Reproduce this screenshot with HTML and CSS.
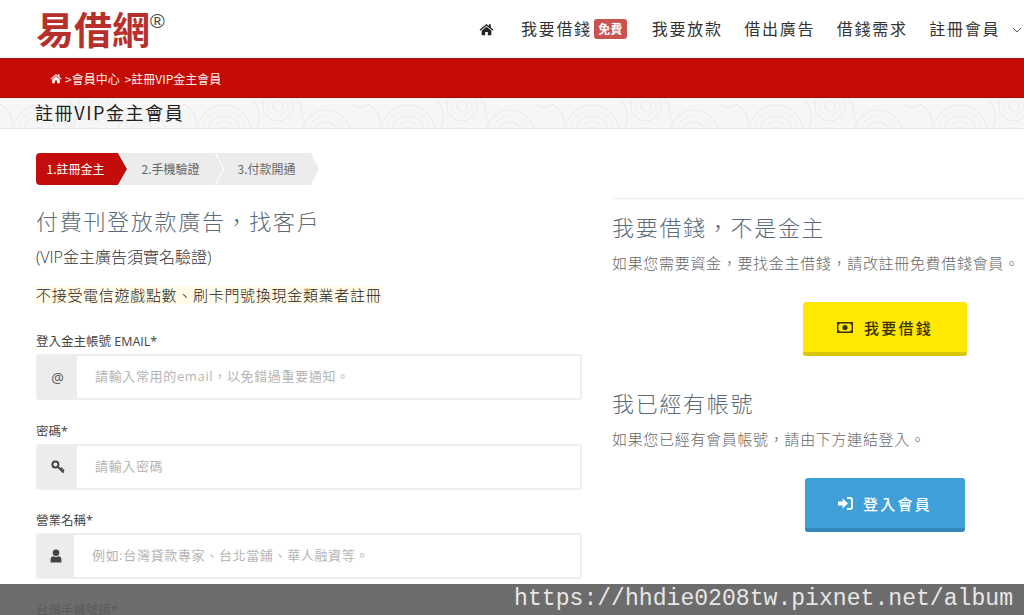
FILE: index.html
```html
<!DOCTYPE html>
<html lang="zh-Hant">
<head>
<meta charset="utf-8">
<title>註冊VIP金主會員</title>
<link rel="stylesheet" href="styles.css">
</head>
<body>
<div class="page">
  <header class="topbar">
    <div class="logo">易借網<span class="reg">®</span></div>
    <nav class="nav">
      <a class="nav-home"><svg class="ico-home" viewBox="0 0 16 14"><path d="M8 1 L0.5 7.2 L1.4 8.3 L8 2.9 L14.6 8.3 L15.5 7.2 L12.6 4.8 V1.4 H10.6 V3.2 Z"/><path d="M8 4 L2.8 8.3 V13.2 H6.6 V9.6 H9.4 V13.2 H13.2 V8.3 Z"/></svg></a>
      <a class="nav-item nav-first">我要借錢<span class="badge">免費</span></a>
      <a class="nav-item">我要放款</a>
      <a class="nav-item">借出廣告</a>
      <a class="nav-item">借錢需求</a>
      <a class="nav-item">註冊會員</a>
      <svg class="ico-chev" viewBox="0 0 10 6"><path d="M1 1 L5 5 L9 1"/></svg>
    </nav>
  </header>
  <div class="crumbbar">
    <svg class="ico-crumb" viewBox="0 0 16 14"><path d="M8 1 L0.5 7.2 L1.4 8.3 L8 2.9 L14.6 8.3 L15.5 7.2 L12.6 4.8 V1.4 H10.6 V3.2 Z"/><path d="M8 4 L2.8 8.3 V13.2 H6.6 V9.6 H9.4 V13.2 H13.2 V8.3 Z"/></svg>
    <span>&gt;會員中心</span><span class="crumb-sep">&gt;註冊VIP金主會員</span>
  </div>
  <div class="titleband">
    <svg class="pattern" aria-hidden="true">
      <defs>
        <pattern id="lace" width="184" height="62" patternUnits="userSpaceOnUse">
          <g fill="none" stroke="#ebebeb" stroke-width="1.1">
            <circle cx="40" cy="34" r="27"/><circle cx="40" cy="34" r="22" stroke-dasharray="2 2"/><circle cx="40" cy="34" r="16"/><circle cx="40" cy="34" r="10" stroke-dasharray="2 2"/><circle cx="40" cy="34" r="5"/>
            <circle cx="94" cy="8" r="15"/><circle cx="94" cy="8" r="10" stroke-dasharray="2 2"/><circle cx="94" cy="8" r="5"/>
            <circle cx="142" cy="36" r="24"/><circle cx="142" cy="36" r="18" stroke-dasharray="2 2"/><circle cx="142" cy="36" r="12"/>
            <path d="M68 0 Q82 20 70 34 Q90 26 112 34 M72 60 Q90 32 114 60 M112 0 Q120 10 118 20 M0 6 Q14 14 12 28 M166 6 Q178 12 184 6"/>
          </g>
        </pattern>
      </defs>
      <rect width="100%" height="100%" fill="url(#lace)"/>
    </svg>
    <h1 class="pagetitle">註冊VIP金主會員</h1>
  </div>
  <ol class="steps">
    <li class="step step-on">1.註冊金主</li>
    <li class="step">2.手機驗證</li>
    <li class="step">3.付款開通</li>
  </ol>
  <main class="columns">
    <section class="left">
      <h2 class="heading">付費刊登放款廣告，找客戶</h2>
      <p class="sub">(VIP金主廣告須實名驗證)</p>
      <p class="notice"><span class="mark">不接受電信遊戲點數、刷卡門號換現金類業者註冊</span></p>
      <div class="field">
        <label class="label">登入金主帳號 EMAIL*</label>
        <div class="inputgroup"><span class="addon">@</span><span class="ph">請輸入常用的email，以免錯過重要通知。</span></div>
      </div>
      <div class="field">
        <label class="label">密碼*</label>
        <div class="inputgroup"><span class="addon"><svg class="ico-key" viewBox="0 0 14 14"><circle cx="4.4" cy="4.4" r="3" fill="none" stroke-width="2"/><path d="M6.6 6.6 L12.6 12.6 M9.4 9.4 L11.2 7.8 M11.2 11.2 L13 9.6" fill="none" stroke-width="2"/></svg></span><span class="ph">請輸入密碼</span></div>
      </div>
      <div class="field">
        <label class="label">營業名稱*</label>
        <div class="inputgroup inputgroup-narrow"><span class="addon"><svg class="ico-user" viewBox="0 0 12 14"><circle cx="6" cy="3.8" r="3.3"/><path d="M0.6 13.4 V10.4 Q0.6 7.6 3.4 7.2 Q6 8.8 8.6 7.2 Q11.4 7.6 11.4 10.4 V13.4 Z"/></svg></span><span class="ph">例如:台灣貸款專家、台北當鋪、華人融資等。</span></div>
      </div>
      <div class="field">
        <label class="label">台灣手機號碼*</label>
      </div>
    </section>
    <aside class="right">
      <h2 class="heading heading-side">我要借錢，不是金主</h2>
      <p class="desc">如果您需要資金，要找金主借錢，請改註冊免費借錢會員。</p>
      <div class="btnrow"><a class="btn btn-yellow"><svg class="ico-money" viewBox="0 0 16 11"><path d="M0 0 H16 V11 H0 Z M2.6 1.6 Q2.6 3 1.4 3 V8 Q2.6 8 2.6 9.4 H13.4 Q13.4 8 14.6 8 V3 Q13.4 3 13.4 1.6 Z" fill-rule="evenodd"/><circle cx="8" cy="5.5" r="2.6"/></svg>我要借錢</a></div>
      <h2 class="heading heading-side heading-second">我已經有帳號</h2>
      <p class="desc">如果您已經有會員帳號，請由下方連結登入。</p>
      <div class="btnrow btnrow-blue"><a class="btn btn-blue"><svg class="ico-signin" viewBox="0 0 15 13"><path d="M0 4.4 H4.6 V1.6 L10 6.5 L4.6 11.4 V8.6 H0 Z"/><path d="M9 1 H12 Q14 1 14 3 V10 Q14 12 12 12 H9" fill="none" stroke="#fff" stroke-width="1.8"/></svg>登入會員</a></div>
    </aside>
  </main>
  <div class="watermark">https://hhdie0208tw.pixnet.net/album</div>
</div>
</body>
</html>
```

FILE: styles.css
```css
* { box-sizing: border-box; }
html, body { margin: 0; padding: 0; }
body {
  font-family: "Open Sans", "Noto Sans CJK TC", sans-serif;
  color: #333;
  background: #fff;
}
.page {
  position: relative;
  width: 1024px;
  height: 615px;
  overflow: hidden;
}
.topbar {
  height: 58px;
  display: flex;
  align-items: center;
  justify-content: space-between;
  padding-left: 36px;
}
.logo {
  font-family: "Noto Sans CJK TC", sans-serif;
  font-weight: 700;
  font-size: 38px;
  line-height: 56px;
  color: #b8302c;
  display: flex;
  align-items: flex-start;
  margin-top: -2px;
}
.reg {
  font-family: "Liberation Sans", sans-serif;
  font-weight: 400;
  font-size: 20px;
  line-height: 22px;
  color: #444;
  margin-top: 10px;
}
.nav {
  display: flex;
  align-items: center;
  width: 545px;
  flex: none;
  padding-top: 1px;
}
.nav-home { display: flex; margin-right: 27px; }
.ico-home { width: 15px; height: 13px; fill: #222; }
.nav-item {
  font-family: "Noto Sans CJK TC", sans-serif;
  font-size: 16px;
  letter-spacing: 1.7px;
  line-height: 22px;
  color: #333;
  display: flex;
  align-items: center;
  margin-right: 21.7px;
  padding-bottom: 4px;
  white-space: nowrap;
}
.nav-first { margin-right: 25px; }
.badge {
  font-size: 12px;
  font-weight: 700;
  letter-spacing: 0;
  line-height: 20px;
  width: 33px;
  text-align: center;
  color: #fff;
  background: #c9534f;
  border-radius: 3px;
  margin-left: 2px;
  margin-top: 2px;
}
.ico-chev { width: 10px; height: 6px; fill: none; stroke: #555; stroke-width: 1; margin-left: -10px; }
.crumbbar {
  height: 40px;
  background: #c40c04;
  border-top: 1px solid #a31510;
  border-bottom: 1px solid #9c0a04;
  color: #fbeeee;
  font-family: "Noto Sans CJK TC", sans-serif;
  font-size: 12px;
  display: flex;
  align-items: center;
  padding-left: 50px;
}
.ico-crumb { width: 12px; height: 11px; fill: #fbeeee; margin-right: 3px; }
.crumb-sep { margin-left: 5px; }
.titleband {
  position: relative;
  height: 31px;
  background: #f6f6f6;
  border-bottom: 1px solid #e8e8e8;
  overflow: hidden;
}
.pattern {
  position: absolute;
  inset: 0;
  width: 100%;
  height: 100%;
}
.pagetitle {
  position: relative;
  margin: 0;
  padding-left: 35px;
  font-family: "Noto Sans CJK TC", sans-serif;
  font-size: 18px;
  font-weight: 400;
  letter-spacing: 1.6px;
  line-height: 28px;
  color: #222;
}
.steps {
  list-style: none;
  margin: 24px 0 0;
  padding: 0 0 0 36px;
  display: flex;
  height: 32px;
}
.step {
  width: 103px;
  margin-right: -7px;
  background: #ececec;
  color: #666;
  font-family: "Noto Sans CJK TC", sans-serif;
  font-size: 12px;
  line-height: 32px;
  text-align: center;
  padding-right: 2px;
  clip-path: polygon(0 0, 92% 0, 100% 50%, 92% 100%, 0 100%, 8% 50%);
}
.step-on {
  width: 91px;
  background: #c40c0c;
  color: #fff;
  border-radius: 4px 0 0 4px;
  padding-right: 12px;
  clip-path: polygon(0 0, 90% 0, 100% 50%, 90% 100%, 0 100%);
  position: relative;
  z-index: 1;
}
.columns {
  display: grid;
  grid-template-columns: 546px 412px;
  column-gap: 30px;
  padding-left: 36px;
  margin-top: 13px;
}
.left { padding-top: 6px; }
.right { border-top: 1px solid #eee; padding-top: 11px; }
.heading {
  margin: 0;
  font-family: "Noto Sans CJK TC", sans-serif;
  font-size: 22px;
  font-weight: 300;
  letter-spacing: 1.7px;
  line-height: 32px;
  color: #5d6b78;
}
.sub {
  margin: 9px 0 0;
  font-family: "Open Sans", "Noto Sans CJK TC", sans-serif;
  font-size: 16px;
  font-weight: 300;
  line-height: 24px;
  color: #333;
}
.notice {
  margin: 17px 0 0;
  font-family: "Noto Sans CJK TC", sans-serif;
  font-size: 15px;
  font-weight: 300;
  letter-spacing: .7px;
  line-height: 18px;
}
.mark { background: #fffbe8; color: #222; display: inline-block; }
.field { margin-bottom: 22.5px; }
.notice + .field { margin-top: 29px; }
.label {
  display: block;
  font-size: 12.5px;
  line-height: 18px;
  color: #444;
  margin-bottom: 3px;
}
.inputgroup {
  height: 46px;
  display: flex;
  align-items: center;
  border: 2px solid #eee;
  border-radius: 3px;
  font-family: "Open Sans", "Noto Sans CJK TC", sans-serif;
  font-size: 13px;
  color: #b4b4b4;
}
.addon {
  width: 39px;
  height: 100%;
  background: #ececec;
  color: #555;
  font-size: 14px;
  display: flex;
  align-items: center;
  justify-content: center;
  flex: none;
}
.inputgroup-narrow .addon { width: 36px; }
.ph { padding: 0 0 3px 18px; letter-spacing: .65px; }
.ico-key { width: 14px; height: 14px; stroke: #444; }
.ico-user { width: 12px; height: 14px; fill: #444; }
.desc {
  margin: 9px 0 0;
  font-family: "Noto Sans CJK TC", sans-serif;
  font-size: 15px;
  font-weight: 300;
  letter-spacing: .68px;
  line-height: 24px;
  color: #666;
  white-space: nowrap;
}
.btnrow { padding-left: 191px; margin-top: 27px; }
.btnrow-blue { padding-left: 193px; }
.heading-second { margin-top: 30px; }
.btn {
  display: flex;
  align-items: center;
  justify-content: center;
  height: 54px;
  width: 164px;
  border-radius: 3px;
  font-family: "Noto Sans CJK TC", sans-serif;
  font-size: 15px;
  font-weight: 500;
  letter-spacing: 2.3px;
}
.btn-yellow {
  background: #ffe900;
  color: #3a3300;
  border-bottom: 4px solid #d9c60a;
}
.btn-blue {
  width: 160px;
  background: #3f9fd9;
  color: #fff;
  border-bottom: 4px solid #3688bb;
}
.ico-money { width: 16px; height: 11px; fill: #3a3300; margin-right: 11px; }
.ico-signin { width: 15px; height: 13px; fill: #fff; margin-right: 10px; }
.watermark {
  position: absolute;
  left: 0;
  right: 0;
  bottom: 0;
  height: 31px;
  background: rgba(92, 92, 92, .9);
  color: #e6e6e6;
  font-family: "Liberation Mono", monospace;
  font-size: 23.1px;
  line-height: 31px;
  text-align: right;
  padding-right: 11px;
  white-space: nowrap;
}
```
